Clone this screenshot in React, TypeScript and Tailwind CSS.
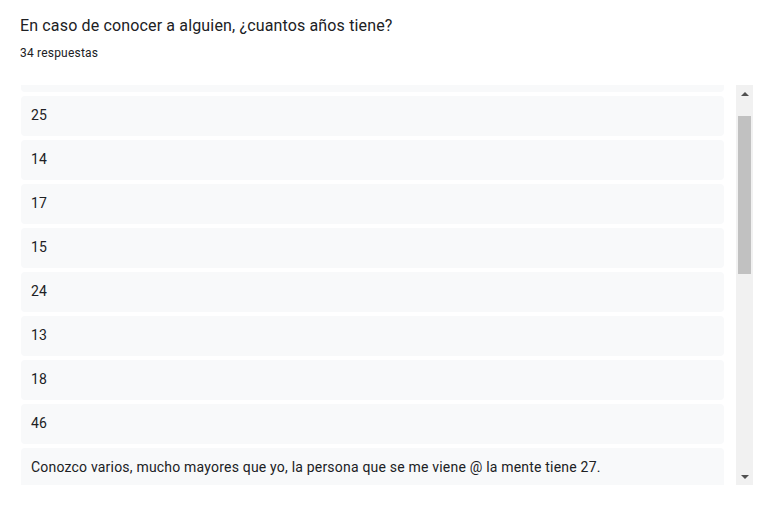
import React from "react";

const items = [
  "",
  "25",
  "14",
  "17",
  "15",
  "24",
  "13",
  "18",
  "46",
  "Conozco varios, mucho mayores que yo, la persona que se me viene @ la mente tiene 27.",
];

export default function App() {
  return (
    <div
      className="w-[763px] h-[508px] bg-white text-[#202124]"
      style={{ fontFamily: "Roboto, 'Liberation Sans', sans-serif" }}
    >
      <div className="pl-5 pt-[14px]">
        <div className="text-[16px] leading-6 tracking-[0.15px]">
          En caso de conocer a alguien, ¿cuantos años tiene?
        </div>
        <div className="text-[12px] leading-4 mt-[7px] tracking-[0.2px]">34 respuestas</div>
      </div>
      <div className="flex mt-6 h-[400px]">
        <div className="ml-[21px] w-[703px] overflow-hidden">
          <div className="-mt-[33px] flex flex-col gap-1">
            {items.map((t, i) => (
              <div
                key={i}
                className="h-10 shrink-0 rounded bg-[#f8f9fa] pl-[10px] pb-[2px] flex items-center text-[14px] tracking-[0.2px]"
              >
                {t}
              </div>
            ))}
          </div>
        </div>
        <div className="ml-3 w-[17px] h-full bg-[#f1f1f1] flex flex-col">
          <div className="h-[17px] flex items-center justify-center">
            <div className="w-0 h-0 border-l-[4px] border-r-[4px] border-b-[4px] border-l-transparent border-r-transparent border-b-[#505050]" />
          </div>
          <div className="mx-[2px] mt-[14px] h-[158px] bg-[#c1c1c1]" />
          <div className="flex-1" />
          <div className="h-[17px] flex items-center justify-center">
            <div className="w-0 h-0 border-l-[4px] border-r-[4px] border-t-[4px] border-l-transparent border-r-transparent border-t-[#505050]" />
          </div>
        </div>
      </div>
    </div>
  );
}
